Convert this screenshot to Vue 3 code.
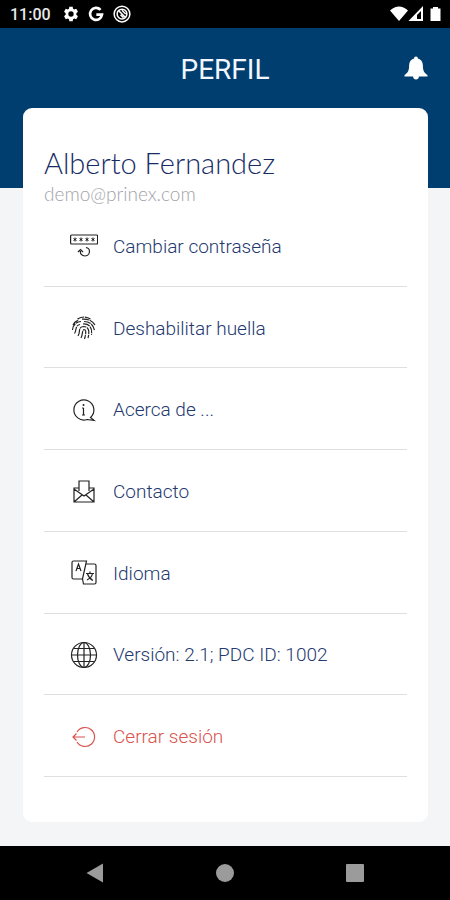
<template>
  <div class="screen">
    <div class="status">
      <span class="time">11:00</span>
      <svg class="status-icon" viewBox="0 0 24 24" fill="#fff">
        <path fill-rule="evenodd" d="M9.500 1h5l.6 3.300 1.800 1 3-1 2.500 4.400-2.400 2.200v2.200l2.400 2.200-2.500 4.400-3-1-1.800 1-.6 3.300h-5l-.6-3.300-1.800-1-3 1-2.500-4.400 2.400-2.200v-2.200l-2.400-2.200 2.500-4.400 3 1 1.800-1zM12 8a4 4 0 1 0 0 8 4 4 0 0 0 0-8z" />
      </svg>
      <svg class="status-icon" viewBox="0 0 24 24" fill="none" stroke="#fff" stroke-width="4">
        <path d="M18.800 5.800A9 9 0 1 0 21 13h-8.500" />
      </svg>
      <svg class="status-icon wide" viewBox="0 0 24 24" fill="none" stroke="#fff">
        <circle cx="12" cy="12" r="10.500" stroke-width="2" />
        <circle cx="12" cy="12" r="6.500" stroke-width="2" />
        <path d="M7 7l10 10M10 13l4 4M12 7l5 5" stroke-width="2" />
      </svg>
      <svg class="signals" viewBox="0 0 52 18" fill="#fff">
        <path d="M0 5.500Q9-2.500 18 5.500L9 16z" />
        <path fill-rule="evenodd" d="M33 1v15H18.500zM31 6l-4 4v4h4z" />
        <path d="M43 2h5v1.500h2.500V16h-10V3.500H43z" />
      </svg>
    </div>

    <header class="header">
      <h1>PERFIL</h1>
      <button class="bell" type="button" aria-label="Notificaciones">
        <svg viewBox="0 0 24 24" fill="#fff">
          <path d="M12 0.500c1.200 0 1.900.8 1.900 1.900 3.400.9 5 3.700 5 7.100 0 5.500 1.300 7.200 4.600 9.500v1.500h-8.600c0 2-1.300 3-2.900 3s-2.900-1-2.900-3H.5V19c3.300-2.300 4.600-4 4.600-9.500 0-3.400 1.600-6.200 5-7.100 0-1.100.7-1.900 1.900-1.900z" />
        </svg>
      </button>
    </header>

    <main class="card">
      <h2>Alberto Fernandez</h2>
      <p class="email">demo@prinex.com</p>

      <ul class="menu">
        <li v-for="item in items" :key="item.icon">
          <button class="item" :class="{ danger: item.icon === 'logout' }" type="button">
            <svg class="icon" viewBox="0 0 28 28" fill="none" stroke="currentColor" stroke-width="1.2">
              <template v-if="item.icon === 'password'">
                <rect x="0.6" y="3" width="27" height="9" rx="1" />
                <path d="M5 5.500v4M3.500 6.500l3 2M6.500 6.500l-3 2M11 5.500v4M9.500 6.500l3 2M12.500 6.500l-3 2M17 5.500v4M15.500 6.500l3 2M18.500 6.500l-3 2M23 5.500v4M21.500 6.500l3 2M24.500 6.500l-3 2" stroke-width="1" />
                <path d="M16 15.500c5 1 4.500 8-1 8.500-3.500 0-5-2.500-4.500-5M8 20l2.500-2.500L13 20" />
              </template>
              <template v-else-if="item.icon === 'fingerprint'">
                <path d="M7.500 5Q14 1 20.500 5M3 11Q4.500 7 9 6M12 5.200Q21 4.500 25 11M2.500 16c0-4 3-8 8.500-8.500M14 7.500c6 0 9.500 3.500 10.500 9M4.500 19.500C7 16 4.500 12 10 10.500M13 10c7-.5 9.500 4.500 8.500 11M8 22c3-5-.5-9 5.500-9.500 6 0 6 6 4.500 11.500M11 24c2-4 1-8 3-8.500 3 0 1.500 6 .5 9.500" stroke-dasharray="7 0.8" />
              </template>
              <template v-else-if="item.icon === 'info'">
                <path d="M20.500 21.500A10 10 0 1 0 17 23.500l7 .8z" />
                <path d="M13.500 12v7M12 12h1.500M12 19h3" />
                <circle cx="13.500" cy="9" r="1" fill="currentColor" stroke="none" />
              </template>
              <template v-else-if="item.icon === 'mail'">
                <path d="M9 13V3h10v10M9 10H4v14h20V10h-5M4 11l10 7 10-7M4 24l8-7M24 24l-8-7" />
              </template>
              <template v-else-if="item.icon === 'language'">
                <path d="M3.500 2h13l-4 18h-9Q2 20 2 18.500v-15Q2 2 3.500 2zM16 5h8.500Q26 5 26 6.500v17q0 1.500-1.500 1.500H13.500l-1-5" />
                <path d="M6 12l2.500-7 2.500 7M7 9.500h3M16 14.500h8M20 12.500v2M22.500 14.500c-.5 3-2.500 5-5.500 6.500M17.500 15c1 3 2.500 5 5.500 6.500" />
              </template>
              <template v-else-if="item.icon === 'globe'">
                <circle cx="14" cy="14" r="12.500" />
                <ellipse cx="14" cy="14" rx="6.500" ry="12.500" />
                <path d="M14 1.500v25M1.500 14h25M4 7.500h20M4 20.500h20" />
              </template>
              <template v-else>
                <path d="M7 9a9.500 9.500 0 1 1 0 10M15 14H3M6.500 10.500L3 14l3.500 3.500" />
              </template>
            </svg>
            <span>{{ item.label }}</span>
          </button>
        </li>
      </ul>
    </main>

    <nav class="navbar">
      <button type="button" aria-label="Atrás">
        <svg viewBox="0 0 20 20" fill="#9b9b9b"><path d="M18 .5v19L1.500 10z" /></svg>
      </button>
      <button type="button" aria-label="Inicio">
        <svg viewBox="0 0 20 20" fill="#9b9b9b"><circle cx="10" cy="10" r="9" /></svg>
      </button>
      <button type="button" aria-label="Recientes">
        <svg viewBox="0 0 20 20" fill="#9b9b9b"><rect x="1" y="1" width="18" height="18" rx="1" /></svg>
      </button>
    </nav>
  </div>
</template>

<script setup>
const items = [
  { icon: "password", label: "Cambiar contraseña" },
  { icon: "fingerprint", label: "Deshabilitar huella" },
  { icon: "info", label: "Acerca de ..." },
  { icon: "mail", label: "Contacto" },
  { icon: "language", label: "Idioma" },
  { icon: "globe", label: "Versión: 2.1; PDC ID: 1002" },
  { icon: "logout", label: "Cerrar sesión" },
];
</script>

<style>
body {
  margin: 0;
}
</style>

<style scoped>
.screen {
  display: flex;
  flex-direction: column;
  min-height: 100vh;
  background: linear-gradient(#003e6f 188px, #f3f5f7 188px);
  font-family: Roboto, "Liberation Sans", sans-serif;
}

button {
  padding: 0;
  border: 0;
  background: none;
  font: inherit;
  cursor: pointer;
}

svg {
  display: block;
}

.status {
  display: flex;
  align-items: center;
  height: 28px;
  padding: 0 8px 0 10px;
  background: #000;
  color: #e8e8e8;
}

.time {
  margin-right: 12px;
  font-size: 16px;
  font-weight: 500;
}

.status-icon {
  width: 16px;
  height: 16px;
  margin-right: 9px;
}

.wide {
  width: 18px;
  height: 18px;
}

.signals {
  width: 52px;
  height: 18px;
  margin-left: auto;
}

.header {
  display: grid;
  grid-template-columns: 24px 1fr 24px;
  align-items: center;
  height: 80px;
  padding: 0 22px;
}

h1 {
  grid-column: 2;
  margin: 4px 0 0;
  color: #f4f6ff;
  font-size: 28px;
  font-weight: 400;
  line-height: 32px;
  text-align: center;
}

.bell svg {
  width: 24px;
  height: 24px;
}

.card {
  display: flex;
  flex: 1;
  flex-direction: column;
  margin: 0 22px 24px 23px;
  padding: 39px 21px 45px;
  border-radius: 9px;
  background: #fff;
}

h2 {
  margin: 0;
  color: #172c67;
  font-family: Lato, "Open Sans", sans-serif;
  font-size: 29px;
  font-weight: 300;
  line-height: 32px;
}

.email {
  margin: 4px 0 0;
  color: #a2a2aa;
  font-family: Lato, "Open Sans", sans-serif;
  font-size: 19px;
  font-weight: 300;
  line-height: 22px;
}

.menu {
  display: flex;
  flex: 1;
  flex-direction: column;
  margin: 0;
  padding: 0;
  list-style: none;
}

.menu li {
  display: flex;
  flex: 1;
  border-bottom: 1px solid #dfdfe1;
}

.item {
  display: flex;
  flex: 1;
  align-items: center;
  gap: 15px;
  padding: 2px 26px 0;
  color: #24396f;
  font-size: 19px;
  font-weight: 300;
  text-align: left;
}

.icon {
  flex: none;
  width: 28px;
  height: 28px;
  color: #222;
}

.danger,
.danger .icon {
  color: #d9534f;
}

.navbar {
  display: flex;
  align-items: center;
  justify-content: space-between;
  height: 54px;
  padding: 0 85px;
  background: #000;
}

.navbar svg {
  width: 20px;
  height: 20px;
}
</style>
